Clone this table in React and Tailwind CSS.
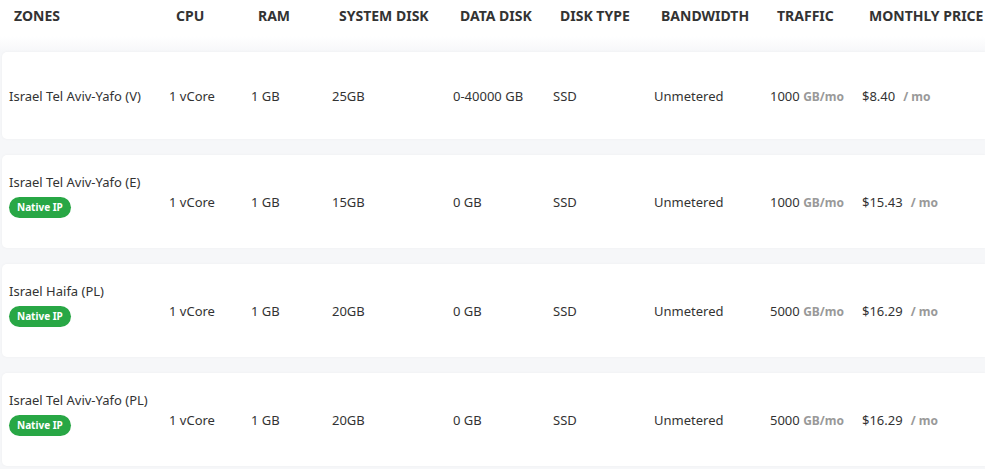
import React from "react";

const cols = "grid grid-cols-[160px_82px_81px_121px_100px_101px_116px_92px_1fr]";

const rows = [
  { zone: "Israel Tel Aviv-Yafo (V)", native: false, sys: "25GB", data: "0-40000 GB", traffic: "1000", price: "$8.40" },
  { zone: "Israel Tel Aviv-Yafo (E)", native: true, sys: "15GB", data: "0 GB", traffic: "1000", price: "$15.43" },
  { zone: "Israel Haifa (PL)", native: true, sys: "20GB", data: "0 GB", traffic: "5000", price: "$16.29" },
  { zone: "Israel Tel Aviv-Yafo (PL)", native: true, sys: "20GB", data: "0 GB", traffic: "5000", price: "$16.29" },
];

const headers = ["ZONES", "CPU", "RAM", "SYSTEM DISK", "DATA DISK", "DISK TYPE", "BANDWIDTH", "TRAFFIC", "MONTHLY PRICE"];

export default function App() {
  return (
    <div className="w-[985px] h-[469px] overflow-hidden bg-[#f6f7f9] font-['Noto_Sans',sans-serif] text-[#333]">
      {/* header */}
      <div className="bg-gradient-to-b from-white from-70% to-[#f6f7f9] h-[52px] pt-[5px]">
        <div className={`${cols} pl-[14px] text-[14px] font-bold text-[#333] whitespace-nowrap`}>
          {headers.map((h, i) => (
            <div key={h} className={i === 0 ? "" : "pl-[2px]"}>{h}</div>
          ))}
        </div>
      </div>

      <div className="flex flex-col gap-[16px] pl-[2px]">
        {rows.map((r, i) => (
          <div
            key={i}
            className={`${cols} items-center bg-white rounded-l-[5px] shadow-[0_0_3px_rgba(0,0,0,0.04)] pl-[7px] pt-[3px] text-[13px] whitespace-nowrap ${
              i === 0 ? "h-[87px]" : "h-[93px]"
            }`}
          >
            <div className={`flex flex-col items-start ${r.native ? "mb-[15px]" : ""}`}>
              <span>{r.zone}</span>
              {r.native && (
                <span className="mt-[4px] rounded-full bg-[#28a745] text-white text-[10px] font-bold px-[8px] h-[21px] leading-[21px]">
                  Native IP
                </span>
              )}
            </div>
            <div>1 vCore</div>
            <div>1 GB</div>
            <div>{r.sys}</div>
            <div>{r.data}</div>
            <div>SSD</div>
            <div>Unmetered</div>
            <div>
              {r.traffic} <span className="text-[12px] font-bold text-[#999]">GB/mo</span>
            </div>
            <div>
              {r.price}
              <span className="ml-[8px] text-[12px] font-bold text-[#999]">/ mo</span>
            </div>
          </div>
        ))}
      </div>
    </div>
  );
}
